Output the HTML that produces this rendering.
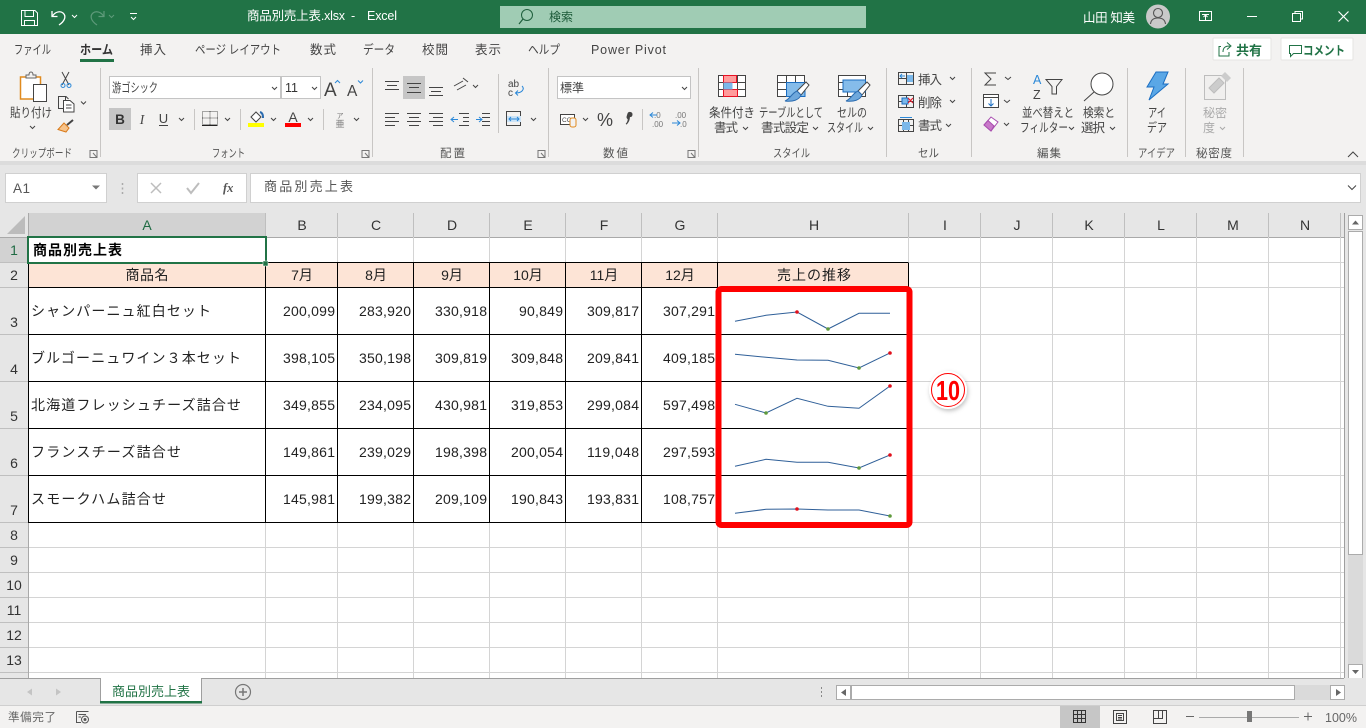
<!DOCTYPE html>
<html lang="ja"><head><meta charset="utf-8"><title>商品別売上表.xlsx - Excel</title>
<style>
html,body{margin:0;padding:0;width:1366px;height:728px;overflow:hidden;background:#fff}
svg{display:block;position:absolute;left:0;top:0}
text{font-family:"Liberation Sans","Noto Sans CJK JP",sans-serif;fill:#444;font-size:12px}
.r{font-size:12.5px;fill:#444}
.g{font-size:11.5px;fill:#555}
.c{font-size:14px;fill:#222}
.n{font-size:14px;fill:#222;text-anchor:end}
.m{font-size:14px;fill:#222;text-anchor:middle}
.h{font-size:14px;fill:#333;text-anchor:middle}
.w{fill:#fff}
.i{fill:none;stroke:#444;stroke-width:1}
.v{fill:none;stroke:#444;stroke-width:1}
.s{fill:none;stroke:#2f5f98;stroke-width:1}
</style></head><body>
<svg width="1366" height="728" viewBox="0 0 1366 728" xmlns="http://www.w3.org/2000/svg">
<defs><filter id="sh" x="-30%" y="-30%" width="160%" height="160%"><feDropShadow dx="1" dy="2" stdDeviation="2" flood-color="#000" flood-opacity=".25"/></filter></defs>
<!-- backgrounds -->
<rect width="1366" height="34" fill="#217346"/>
<rect y="34" width="1366" height="127" fill="#f3f2f1"/>
<rect y="161" width="1366" height="52" fill="#e6e6e6"/>
<rect y="161" width="1366" height="4" fill="#dcdcdc"/>
<!-- title bar -->
<g fill="none" stroke="#fff" stroke-width="1">
<path d="M21.5 10.5H35L37.5 13V25.5H21.5ZM25 10.5V16.5H33.5V10.5M24.5 25.5V20.5H34.5V25.5"/>
<path d="M52 11V16.5H57.5M52.5 16C55 12 60 10.5 63 13C66.5 16 65 21 59 25" stroke-width="1.3"/>
<path d="M72 15L74.5 17.5L77 15"/>
<g stroke="#5e9a7a"><path d="M104 11V16.5H98.5M103.5 16C101 12 96 10.5 93 13C89.5 16 91 21 97 25" stroke-width="1.2"/><path d="M109 15L111.5 17.5L114 15"/></g>
<path d="M130 13.5H137M131 17L133.5 19.5L136 17"/>
<rect x="1199.5" y="11.5" width="12" height="9"/><path d="M1202 14.5H1209M1205.5 20V15M1203.5 17L1205.5 15L1207.5 17"/>
<path d="M1247 16.5H1257"/>
<path d="M1292.5 13.5H1300.5V21.5H1292.5ZM1295 13V11.5H1302.5V19H1301"/>
<path d="M1338.5 11.5L1348.5 21.5M1348.5 11.5L1338.5 21.5" stroke-width="1.2"/>
</g>
<text x="247" y="20" class="w" style="font-size:12.5px" textLength="98">商品別売上表.xlsx</text>
<text x="351" y="20" class="w" style="font-size:12.5px">-</text>
<text x="367" y="20" class="w" style="font-size:12.5px" textLength="30">Excel</text>
<rect x="500" y="6" width="366" height="22" fill="#a0ccb4"/>
<circle cx="527" cy="15" r="5.5" fill="none" stroke="#1f5f3d" stroke-width="1"/><path d="M523 19L519 24" stroke="#1f5f3d" fill="none" stroke-width="1.2"/>
<text x="549" y="21" style="font-size:12px;fill:#1c5a39" textLength="24">検索</text>
<text x="1083" y="22" class="w" style="font-size:12.5px" textLength="52">山田 知美</text>
<circle cx="1158" cy="16.5" r="12" fill="#c9c9c9"/>
<circle cx="1158" cy="13" r="4.5" fill="none" stroke="#555" stroke-width="1.1"/><path d="M1150.5 24C1151 19.5 1154 18 1158 18C1162 18 1165 19.5 1165.5 24" fill="none" stroke="#555" stroke-width="1.1"/>
<!-- tabs -->
<g>
<text x="14" y="54" class="r" textLength="37" lengthAdjust="spacingAndGlyphs">ファイル</text>
<text x="80" y="54" class="r" style="font-weight:700;fill:#333" textLength="33" lengthAdjust="spacingAndGlyphs">ホーム</text>
<text x="140" y="54" class="r" textLength="26">挿入</text>
<text x="195" y="54" class="r" textLength="86" lengthAdjust="spacingAndGlyphs">ページ レイアウト</text>
<text x="310" y="54" class="r" textLength="26">数式</text>
<text x="363" y="54" class="r" textLength="32" lengthAdjust="spacingAndGlyphs">データ</text>
<text x="422" y="54" class="r" textLength="26">校閲</text>
<text x="475" y="54" class="r" textLength="26">表示</text>
<text x="528" y="54" class="r" textLength="32" lengthAdjust="spacingAndGlyphs">ヘルプ</text>
<text x="591" y="54" class="r" textLength="75">Power Pivot</text>
</g>
<rect x="80" y="59" width="34" height="3" fill="#217346"/>
<!-- share/comment -->
<rect x="1213" y="38" width="58" height="22" rx="1" fill="#fff" stroke="#e6e4e2"/>
<rect x="1281" y="38" width="72" height="22" rx="1" fill="#fff" stroke="#e6e4e2"/>
<path d="M1221 46.5H1219V56H1229V52M1223 52C1223 47 1226 46 1230 46M1227 42.5L1231 46L1227 49.5" fill="none" stroke="#217346"/>
<text x="1236" y="55" style="font-size:13px;font-weight:700;fill:#217346" textLength="26">共有</text>
<path d="M1289.5 45.5H1301.5V53.5H1293.5L1290.5 56.5V53.5H1289.5Z" fill="none" stroke="#217346"/>
<text x="1303" y="55" style="font-size:12.5px;font-weight:700;fill:#217346" textLength="42" lengthAdjust="spacingAndGlyphs">コメント</text>
<!-- group separators -->
<path d="M100.5 68V157M372.5 68V157M548.5 68V157M698.5 68V157M886.5 68V157M971.5 68V157M1127.5 68V157M1185.5 68V157M1243.5 68V157M498.5 74V133M194.5 109V130M240.5 109V130M323.5 109V130M642.5 109V130" stroke="#c8c6c4" fill="none"/>
<!-- group labels -->
<text x="12" y="157" class="g" textLength="60" lengthAdjust="spacingAndGlyphs">クリップボード</text>
<text x="212" y="157" class="g" textLength="33" lengthAdjust="spacingAndGlyphs">フォント</text>
<text x="440" y="157" class="g" textLength="25">配置</text>
<text x="603" y="157" class="g" textLength="25">数値</text>
<text x="773" y="157" class="g" textLength="37" lengthAdjust="spacingAndGlyphs">スタイル</text>
<text x="918" y="157" class="g" textLength="21" lengthAdjust="spacingAndGlyphs">セル</text>
<text x="1037" y="157" class="g" textLength="24">編集</text>
<text x="1138" y="157" class="g" textLength="37" lengthAdjust="spacingAndGlyphs">アイデア</text>
<text x="1196" y="157" class="g" textLength="36">秘密度</text>
<g fill="none" stroke="#777"><path d="M90 150.5H97V157.5H90ZM93 153L97 157.5"/><path d="M362 150.5H369V157.5H362ZM365 153L369 157.5"/><path d="M538 150.5H545V157.5H538ZM541 153L545 157.5"/><path d="M688 150.5H695V157.5H688ZM691 153L695 157.5"/></g>
<path d="M1348 157L1353 152L1358 157" fill="none" stroke="#444"/>
<!-- clipboard -->
<rect x="20.5" y="77" width="20" height="22" fill="#fff" stroke="#e08a1e" stroke-width="1.5"/>
<path d="M26 77V75H29C29 71 33 71 33 75H36V78H26Z" fill="#f3f2f1" stroke="#666"/>
<rect x="33.5" y="84.5" width="13" height="17" fill="#fff" stroke="#444"/>
<text x="10" y="117" class="r" textLength="42" lengthAdjust="spacingAndGlyphs">貼り付け</text>
<path d="M30 126L32.5 128.5L35 126" class="i"/>
<path d="M62 72L69 85M69 72L62 85" stroke="#444" fill="none"/><circle cx="63" cy="85.5" r="2" fill="none" stroke="#2b88d8"/><circle cx="69" cy="85.5" r="2" fill="none" stroke="#2b88d8"/>
<path d="M58.5 96.5H66L68.5 99" class="i"/><rect x="58.5" y="96.5" width="7" height="12" fill="none" stroke="#444"/><path d="M63.5 100.5H70L74 104V112H63.5ZM66 105H71.5M66 108H71.5" fill="#fff" stroke="#444"/>
<path d="M81 101.5L83.5 104L86 101.5" class="i"/>
<path d="M64 123L69 128L66 132L58 129.5Z" fill="#f7c38a" stroke="#d97a1a"/><path d="M67 125L73 120" stroke="#444" stroke-width="2" fill="none"/>
<!-- font boxes -->
<rect x="109.5" y="76.5" width="171" height="22" fill="#fff" stroke="#c4c4c4"/>
<rect x="281.5" y="76.5" width="39" height="22" fill="#fff" stroke="#c4c4c4"/>
<text x="112" y="92" style="font-size:12.5px;fill:#444" textLength="46" lengthAdjust="spacingAndGlyphs">游ゴシック</text>
<text x="285" y="92" style="font-size:12.5px;fill:#333" textLength="13">11</text>
<path d="M272 87L274.5 89.5L277 87M312 87L314.5 89.5L317 87" class="i"/>
<text x="324" y="96" style="font-size:19px;fill:#444">A</text><path d="M335 83L337.5 80.5L340 83" fill="none" stroke="#2b88d8"/>
<text x="347" y="96" style="font-size:15.5px;fill:#444">A</text><path d="M358 80.5L360.5 83L363 80.5" fill="none" stroke="#2b88d8"/>
<rect x="109" y="108" width="22" height="22" fill="#c6c6c6"/>
<text x="120" y="124" style="font-size:13.5px;font-weight:700;fill:#333;text-anchor:middle">B</text>
<text x="142" y="124" style="font-size:13.5px;font-style:italic;font-family:'Liberation Serif',serif;fill:#444;text-anchor:middle">I</text>
<text x="163.5" y="123" style="font-size:13px;fill:#444;text-anchor:middle">U</text><path d="M159 125.5H168" stroke="#444"/>
<path d="M179 118L181.5 120.5L184 118M225 118L227.5 120.5L230 118M271 118L273.5 120.5L276 118M308 118L310.5 120.5L313 118M354 118L356.5 120.5L359 118" class="i"/>
<path d="M202.5 111.5H217.5V124.5H202.5ZM210 111.5V124.5M202.5 118H217.5" fill="none" stroke="#555" stroke-dasharray="1 1"/><path d="M202 125.5H217.5" stroke="#222"/>
<path d="M251 117L256 112L261 117L256 122Z" fill="#fff" stroke="#444"/><path d="M260 112C263 113 263 116 263 118" stroke="#2b6cb0" stroke-width="2" fill="none"/><rect x="248" y="123" width="16" height="4" fill="#ff0"/>
<text x="293" y="122" style="font-size:14px;fill:#444;text-anchor:middle">A</text><rect x="285" y="123" width="16" height="4" fill="#f00"/>
<text x="340" y="118" style="font-size:7px;fill:#777;text-anchor:middle">ア</text><text x="340" y="127" style="font-size:9px;fill:#777;text-anchor:middle">亜</text>
<!-- alignment -->
<g fill="none" stroke="#444">
<path d="M385 81.5H399M387 85.5H397M385 89.5H399"/>
<rect x="403" y="76" width="22" height="23" fill="#c6c6c6" stroke="none"/>
<path d="M407 83.5H421M409 87.5H419M407 92.5H421"/>
<path d="M429 87.5H443M431 91.5H441M429 95.5H443"/>
<path d="M385 113.5H399M385 117.5H395M385 121.5H399M385 125.5H395"/>
<path d="M407 113.5H421M409 117.5H419M407 121.5H421M409 125.5H419"/>
<path d="M429 113.5H443M433 117.5H443M429 121.5H443M433 125.5H443"/>
<path d="M459 113.5H469M463 117.5H469M463 121.5H469M459 125.5H469"/>
<path d="M482 113.5H490M482 117.5H490M482 121.5H490M482 125.5H490"/>
<path d="M454 86L463 81M457 90L466 85M463 78L468 82"/>
<path d="M473 85L475.5 87.5L478 85"/>
<rect x="506.5" y="111.5" width="14" height="14"/>
<path d="M531 118L533.5 120.5L536 118"/>
</g>
<rect x="507" y="116" width="14" height="6" fill="#cce4f7"/>
<path d="M509 119H519M511 117L509 119L511 121M517 117L519 119L517 121" fill="none" stroke="#2b88d8"/>
<path d="M451 119.5H458M454 117L451 119.5L454 122" fill="none" stroke="#2b88d8"/>
<path d="M476 119.5H482M479 117L482 119.5L479 122" fill="none" stroke="#2b88d8"/>
<text x="508" y="87" style="font-size:10px;fill:#444">ab</text><text x="508" y="96" style="font-size:10px;fill:#444">c</text>
<path d="M522 86C525 89 522 93 516 93M518 90.5L515.5 93L518 95.5" fill="none" stroke="#2b88d8"/>
<!-- number -->
<rect x="557.5" y="76.5" width="133" height="22" fill="#fff" stroke="#c4c4c4"/>
<text x="560" y="92" style="font-size:12px;fill:#444" textLength="24">標準</text>
<path d="M682 87L684.5 89.5L687 87" class="i"/>
<rect x="560.5" y="114.5" width="14" height="10" fill="#fff" stroke="#444"/><text x="562" y="122" style="font-size:6.5px;fill:#444">CCC</text>
<rect x="570" y="118" width="6" height="9" rx="2" fill="#f3f2f1" stroke="#e08a1e"/>
<path d="M583 118L585.5 120.5L588 118" class="i"/>
<text x="605" y="126" style="font-size:18px;fill:#444;text-anchor:middle">%</text>
<path d="M627.5 113.5a2.6 2.6 0 1 1 2.4 3.6c0 3-1.200 5.500-3.400 7.500l-0.800-.8c1.400-1.500 2-3 2-4.700c-1-.6-1.500-1.700-1-3z" fill="#444"/>
<text x="654" y="118" style="font-size:8px;fill:#777">.0</text><text x="652" y="127" style="font-size:8px;fill:#777">.00</text>
<path d="M650 115H657M653 112.5L650 115L653 117.5" fill="none" stroke="#2b88d8"/>
<text x="675" y="118" style="font-size:8px;fill:#777">.00</text><text x="680" y="127" style="font-size:8px;fill:#777">.0</text>
<path d="M672 123H680M677 120.5L680 123L677 125.5" fill="none" stroke="#2b88d8"/>
<!-- styles -->
<g fill="none" stroke="#444">
<rect x="718.5" y="75.5" width="27" height="21" fill="#fff"/><path d="M718.5 82.500H745.5M718.5 89.5H745.5M723.500 75.5V96.5M737.5 75.5V96.5"/>
<rect x="777.5" y="75.5" width="27" height="21" fill="#fff"/><path d="M777.5 82.5H804.5M777.5 89.5H804.5M786.500 75.5V96.5M795.5 75.5V96.5"/>
<rect x="838.5" y="75.5" width="27" height="21" fill="#fff"/><path d="M838.5 82.5H843M838.5 89.5H843M847.5 92V96.5M856.5 92V96.5M843 92H865.5"/>
</g>
<path d="M723.5 75.5H736.5V82.5H723.5ZM723.5 89.5H737.5V96.5H723.5Z" fill="#ff9c9c" stroke="#e81123"/>
<rect x="723.5" y="82.5" width="9" height="7" fill="#7bb8ea"/>
<rect x="786.5" y="82.5" width="18.500" height="14" fill="#85bcea" stroke="#1b6ec2"/>
<rect x="843" y="80" width="22.500" height="12" fill="#85bcea" stroke="#1b6ec2"/>
<path d="M806 82L809 85L801 95L797 91Z" fill="#fff" stroke="#444"/><path d="M797 91L801 95C799 100 793 102 785 101C790 99 792 93 797 91Z" fill="#6fa8dc" stroke="#2b6cb0"/>
<path d="M867 82L870 85L862 95L858 91Z" fill="#fff" stroke="#444"/><path d="M858 91L862 95C860 100 854 102 846 101C851 99 853 93 858 91Z" fill="#6fa8dc" stroke="#2b6cb0"/>
<text x="709" y="117" class="r" textLength="46" lengthAdjust="spacingAndGlyphs">条件付き</text>
<text x="714" y="132" class="r" textLength="24">書式</text>
<text x="759" y="117" class="r" textLength="64" lengthAdjust="spacingAndGlyphs">テーブルとして</text>
<text x="761" y="132" class="r" textLength="48">書式設定</text>
<text x="837" y="117" class="r" textLength="30" lengthAdjust="spacingAndGlyphs">セルの</text>
<text x="827" y="132" class="r" textLength="36" lengthAdjust="spacingAndGlyphs">スタイル</text>
<path d="M743 127L745.5 129.5L748 127M813 127L815.5 129.5L818 127M868 127L870.5 129.5L873 127" class="i"/>
<!-- cells group -->
<g fill="none" stroke="#444">
<path d="M898.5 72.5H913.5V84.5H898.5ZM898.5 78.5H913.5M906.5 72.5V84.5"/>
<path d="M898.5 95.5H913.5V107.5H898.5ZM898.5 101.5H913.5M906.5 95.5V107.5"/>
<path d="M898.5 119.5H913.5V131.5H898.5ZM898.5 125.5H913.5M903.5 119.5V131.5M908.5 119.5V131.5"/>
<path d="M950 77L952.5 79.5L955 77M950 100L952.5 102.5L955 100M946 124L948.5 126.5L951 124"/>
</g>
<rect x="907" y="75" width="6" height="7" fill="#7bb8ea"/><path d="M900 76H905M902 74L900 76L902 78" fill="none" stroke="#2b88d8"/>
<rect x="902" y="98" width="6" height="6" fill="#7bb8ea" stroke="#1b6ec2"/><path d="M908 98L913 103M913 98L908 103" stroke="#e81123" fill="none"/>
<rect x="902" y="122" width="8" height="8" fill="#7bb8ea"/><path d="M900 117.5H912" stroke="#2b88d8"/>
<text x="918" y="84" class="r" textLength="24">挿入</text>
<text x="918" y="107" class="r" textLength="24">削除</text>
<text x="918" y="130" class="r" textLength="24">書式</text>
<!-- editing -->
<path d="M996 73H985L991 79L985 85H996" fill="none" stroke="#444"/>
<path d="M1005 77L1008 79.5L1011 77M1004 100L1007 102.5L1010 100M1004 123L1006.5 125.5L1009 123" class="i"/>
<rect x="983.5" y="94.5" width="15" height="13" fill="#fff" stroke="#444"/><path d="M983.5 97.5H998.5" stroke="#444"/><path d="M991 99V106M988.5 103.5L991 106L993.5 103.5" stroke="#1b6ec2" fill="none"/>
<path d="M984 125L991 117L998 122L991 131Z" fill="#fff" stroke="#a94fb0"/><path d="M984 125L988 120.5L994 126L991 131Z" fill="#c879c9" stroke="#a94fb0"/>
<text x="1033" y="84" style="font-size:12.5px;fill:#2b88d8">A</text>
<text x="1033" y="99" style="font-size:12.5px;fill:#444">Z</text>
<path d="M1046 79.5H1062L1056.5 86.5V94L1052 94V86.5Z" fill="none" stroke="#444"/>
<circle cx="1102" cy="84" r="11" fill="#fff" stroke="#444"/><path d="M1094 92L1084 101" stroke="#444" fill="none"/>
<text x="1022" y="117" class="r" textLength="52" lengthAdjust="spacingAndGlyphs">並べ替えと</text>
<text x="1020" y="132" class="r" textLength="48" lengthAdjust="spacingAndGlyphs">フィルター</text>
<text x="1083" y="117" class="r" textLength="32" lengthAdjust="spacingAndGlyphs">検索と</text>
<text x="1081" y="132" class="r" textLength="24">選択</text>
<path d="M1069 127L1071.5 129.5L1074 127M1110 127L1112.5 129.5L1115 127" class="i"/>
<!-- ideas -->
<path d="M1156 72H1168L1163 84H1168L1149 100L1154 87H1147Z" fill="#5aa7e6" stroke="#1b6ec2"/>
<text x="1148" y="117" class="r" textLength="18" lengthAdjust="spacingAndGlyphs">アイ</text>
<text x="1147" y="132" class="r" textLength="20" lengthAdjust="spacingAndGlyphs">デア</text>
<!-- sensitivity -->
<rect x="1204.5" y="75.5" width="21" height="24" fill="#f0efee" stroke="#bdbdbd"/>
<path d="M1209 88L1219 78L1224 83L1214 93Z" fill="#ccc" stroke="#bdbdbd"/><path d="M1221 76L1225 72L1231 78L1227 82Z" fill="#ccc"/>
<text x="1203" y="117" style="font-size:12px;fill:#aaa" textLength="24">秘密</text>
<text x="1203" y="132" style="font-size:12px;fill:#aaa">度</text>
<path d="M1220 127L1222.5 129.5L1225 127" fill="none" stroke="#aaa"/>
<!-- formula bar -->
<rect x="5.5" y="173.5" width="101" height="29" fill="#fff" stroke="#d0d0d0"/>
<text x="13" y="193" style="font-size:13.5px;fill:#555" textLength="17">A1</text>
<path d="M92 185.5H100L96 189.5Z" fill="#777"/>
<path d="M122.5 183V185M122.5 187.5V189.5M122.5 192V194" stroke="#aaa" stroke-width="1.5"/>
<rect x="137.5" y="173.5" width="109" height="29" fill="#fff" stroke="#d0d0d0"/>
<rect x="250.5" y="173.5" width="1110" height="29" fill="#fff" stroke="#d0d0d0"/>
<path d="M151 183L161 193M161 183L151 193" stroke="#bdbdbd" stroke-width="1.5" fill="none"/>
<path d="M187 188L191 193L199 183" stroke="#bdbdbd" stroke-width="2" fill="none"/>
<text x="223" y="192" style="font-size:12.5px;font-weight:700;font-style:italic;font-family:'Liberation Serif',serif;fill:#555">fx</text>
<text x="264" y="191" style="font-size:13px;fill:#555" textLength="89">商品別売上表</text>
<path d="M1348 185.5L1352 189.5L1356 185.5" fill="none" stroke="#444"/>
<!-- sheet -->
<rect x="29" y="237" width="1315" height="441" fill="#fff"/>
<rect y="213" width="1366" height="24" fill="#e6e6e6"/>
<rect x="0" y="237" width="28" height="441" fill="#e6e6e6"/>
<rect x="29" y="213" width="237" height="24" fill="#d2d2d2"/>
<rect x="0" y="237" width="28" height="26" fill="#d2d2d2"/>
<path d="M25 216V234H7Z" fill="#bcbcbc"/>
<path d="M28.5 213V678M0 237.5H1344" stroke="#a9a9a9" fill="none"/>
<path d="M265.5 213V237M337.5 213V237M413.5 213V237M489.5 213V237M565.5 213V237M641.5 213V237M717.5 213V237M908.5 213V237M980.5 213V237M1052.5 213V237M1124.5 213V237M1196.5 213V237M1268.5 213V237M1340.5 213V237M0 262.5H28M0 287.5H28M0 334.5H28M0 381.5H28M0 428.5H28M0 475.5H28M0 522.5H28M0 547.5H28M0 572.5H28M0 597.5H28M0 622.5H28M0 647.5H28M0 672.5H28" stroke="#bfbfbf" fill="none"/>
<path d="M265.5 237V678M337.5 237V678M413.5 237V678M489.5 237V678M565.5 237V678M641.5 237V678M717.5 237V678M908.5 237V678M980.5 237V678M1052.5 237V678M1124.5 237V678M1196.5 237V678M1268.5 237V678M1340.5 237V678M29 262.5H1344M29 287.5H1344M29 334.5H1344M29 381.5H1344M29 428.5H1344M29 475.5H1344M29 522.5H1344M29 547.5H1344M29 572.5H1344M29 597.5H1344M29 622.5H1344M29 647.5H1344M29 672.5H1344" stroke="#d4d4d4" fill="none"/>
<path d="M1344.5 213V678" stroke="#9f9f9f"/>
<rect x="29" y="263" width="880" height="25" fill="#fde4d6"/>
<path d="M29 262.5H908.5M29 287.5H908.5M29 334.5H908.5M29 381.5H908.5M29 428.5H908.5M29 475.5H908.5M29 522.5H908.5M28.5 263V523M265.5 263V523M337.5 263V523M413.5 263V523M489.5 263V523M565.5 263V523M641.5 263V523M717.5 263V523M908.5 263V523" stroke="#000" fill="none"/>
<!-- column headers -->
<text x="147" y="230" class="h" style="fill:#1f6b43">A</text>
<text x="302" y="230" class="h">B</text><text x="376" y="230" class="h">C</text><text x="452" y="230" class="h">D</text><text x="528" y="230" class="h">E</text><text x="604" y="230" class="h">F</text><text x="680" y="230" class="h">G</text><text x="814" y="230" class="h">H</text><text x="945" y="230" class="h">I</text><text x="1017" y="230" class="h">J</text><text x="1089" y="230" class="h">K</text><text x="1161" y="230" class="h">L</text><text x="1233" y="230" class="h">M</text><text x="1305" y="230" class="h">N</text>
<!-- row headers -->
<text x="14" y="255" class="h" style="fill:#1f6b43">1</text><text x="14" y="280" class="h">2</text><text x="14" y="327" class="h">3</text><text x="14" y="374" class="h">4</text><text x="14" y="421" class="h">5</text><text x="14" y="468" class="h">6</text><text x="14" y="515" class="h">7</text><text x="14" y="540" class="h">8</text><text x="14" y="565" class="h">9</text><text x="14" y="590" class="h">10</text><text x="14" y="615" class="h">11</text><text x="14" y="640" class="h">12</text><text x="14" y="665" class="h">13</text>
<!-- selected cell -->
<rect x="28" y="237" width="238" height="26" fill="none" stroke="#217346" stroke-width="2"/>
<rect x="263" y="261" width="5" height="5" fill="#217346" stroke="#fff" stroke-width=".5"/>
<text x="33" y="255" style="font-size:14px;font-weight:700;fill:#000" textLength="89">商品別売上表</text>
<!-- table header -->
<text x="147" y="280" class="m" textLength="43">商品名</text>
<text x="302" y="280" class="m">7月</text><text x="376" y="280" class="m">8月</text><text x="452" y="280" class="m">9月</text><text x="528" y="280" class="m">10月</text><text x="604" y="280" class="m">11月</text><text x="680" y="280" class="m">12月</text>
<text x="777" y="280" style="font-size:14px;fill:#222" textLength="74">売上の推移</text>
<!-- rows -->
<text x="31" y="316" class="c" textLength="180">シャンパーニュ紅白セット</text>
<text x="335" y="316" class="n" textLength="52">200,099</text><text x="411" y="316" class="n" textLength="52">283,920</text><text x="487" y="316" class="n" textLength="52">330,918</text><text x="563" y="316" class="n" textLength="44">90,849</text><text x="639" y="316" class="n" textLength="52">309,817</text><text x="715" y="316" class="n" textLength="52">307,291</text>
<text x="31" y="363" class="c" textLength="210">ブルゴーニュワイン３本セット</text>
<text x="335" y="363" class="n" textLength="52">398,105</text><text x="411" y="363" class="n" textLength="52">350,198</text><text x="487" y="363" class="n" textLength="52">309,819</text><text x="563" y="363" class="n" textLength="52">309,848</text><text x="639" y="363" class="n" textLength="52">209,841</text><text x="715" y="363" class="n" textLength="52">409,185</text>
<text x="31" y="410" class="c" textLength="210">北海道フレッシュチーズ詰合せ</text>
<text x="335" y="410" class="n" textLength="52">349,855</text><text x="411" y="410" class="n" textLength="52">234,095</text><text x="487" y="410" class="n" textLength="52">430,981</text><text x="563" y="410" class="n" textLength="52">319,853</text><text x="639" y="410" class="n" textLength="52">299,084</text><text x="715" y="410" class="n" textLength="52">597,498</text>
<text x="31" y="457" class="c" textLength="150">フランスチーズ詰合せ</text>
<text x="335" y="457" class="n" textLength="52">149,861</text><text x="411" y="457" class="n" textLength="52">239,029</text><text x="487" y="457" class="n" textLength="52">198,398</text><text x="563" y="457" class="n" textLength="52">200,054</text><text x="639" y="457" class="n" textLength="52">119,048</text><text x="715" y="457" class="n" textLength="52">297,593</text>
<text x="31" y="504" class="c" textLength="135">スモークハム詰合せ</text>
<text x="335" y="504" class="n" textLength="52">145,981</text><text x="411" y="504" class="n" textLength="52">199,382</text><text x="487" y="504" class="n" textLength="52">209,109</text><text x="563" y="504" class="n" textLength="52">190,843</text><text x="639" y="504" class="n" textLength="52">193,831</text><text x="715" y="504" class="n" textLength="52">108,757</text>
<!-- sparklines -->
<polyline class="s" points="735,321.3 766,315.3 797,312 828,329 859,313.3 890,313.3"/>
<polyline class="s" points="735,354.3 766,357.3 797,360 828,360.3 859,368 890,353"/>
<polyline class="s" points="735,404.3 766,413 797,398.3 828,406.3 859,408.3 890,386"/>
<polyline class="s" points="735,466.3 766,459.3 797,462.3 828,462.3 859,468 890,455"/>
<polyline class="s" points="735,513.3 766,509.3 797,509 828,510 859,510 890,516"/>
<g fill="#e0101c"><circle cx="797" cy="312" r="1.8"/><circle cx="890" cy="353" r="1.8"/><circle cx="890" cy="386" r="1.8"/><circle cx="890" cy="455" r="1.8"/><circle cx="797" cy="509" r="1.8"/></g>
<g fill="#5f9a3c"><circle cx="828" cy="329" r="1.8"/><circle cx="859" cy="368" r="1.8"/><circle cx="766" cy="413" r="1.8"/><circle cx="859" cy="468" r="1.8"/><circle cx="890" cy="516" r="1.8"/></g>
<!-- callout -->
<rect x="718.5" y="289" width="191" height="236" rx="3" fill="none" stroke="#f00" stroke-width="6"/>
<circle cx="948" cy="390" r="19" fill="#fff" filter="url(#sh)"/>
<circle cx="948" cy="390" r="16.5" fill="none" stroke="#f00" stroke-width="1"/>
<text x="948" y="400" style="font-size:28px;font-weight:700;fill:#f00;text-anchor:middle" textLength="24" lengthAdjust="spacingAndGlyphs">10</text>
<!-- vertical scrollbar -->
<rect x="1345" y="213" width="21" height="465" fill="#e6e6e6"/>
<rect x="1348" y="231" width="15" height="433" fill="#dadada"/>
<rect x="1348.5" y="215.5" width="14" height="14" fill="#fff" stroke="#ababab"/><path d="M1352 224.5H1359L1355.5 220.5Z" fill="#666"/>
<rect x="1348.5" y="231.5" width="14" height="323" fill="#fff" stroke="#ababab"/>
<rect x="1348.5" y="664.5" width="14" height="14" fill="#fff" stroke="#ababab"/><path d="M1352 670H1359L1355.5 674Z" fill="#666"/>
<!-- sheet tabs -->
<rect y="678" width="1366" height="28" fill="#e6e6e6"/>
<path d="M0 678.5H1344" stroke="#9f9f9f"/>
<path d="M32 688.5V695.5L27 692ZM56 688.5V695.5L61 692Z" fill="#c4c4c4"/>
<rect x="100.5" y="678.5" width="101" height="24" fill="#fff" stroke="#9f9f9f"/>
<rect x="100" y="701" width="102" height="2.5" fill="#217346"/>
<rect x="101" y="677" width="100" height="2" fill="#fff"/>
<text x="112" y="696" style="font-size:13px;fill:#217346" textLength="78">商品別売上表</text>
<circle cx="243" cy="692" r="7.5" fill="none" stroke="#777" stroke-width="1.2"/><path d="M239 692H247M243 688V696" stroke="#777" stroke-width="1.5"/>
<path d="M821.5 687V689M821.5 691V693M821.5 695V697" stroke="#888"/>
<rect x="836" y="685" width="494" height="15" fill="#dadada"/>
<rect x="836.5" y="685.5" width="14" height="14" fill="#fff" stroke="#ababab"/><path d="M846 689V696L841 692.5Z" fill="#666"/>
<rect x="851.5" y="685.5" width="443" height="14" fill="#fff" stroke="#ababab"/>
<rect x="1330.5" y="685.5" width="14" height="14" fill="#fff" stroke="#ababab"/><path d="M1336 689V696L1341 692.5Z" fill="#666"/>
<!-- status bar -->
<rect y="706" width="1366" height="22" fill="#f3f2f1"/>
<path d="M0 705.5H1366" stroke="#cfcfcf"/>
<text x="8" y="721" style="font-size:11.5px;fill:#666" textLength="48">準備完了</text>
<path d="M76.5 711.5H88.5M76.5 711.5V722.5H81M78.5 714.5H86M78.5 717H81" fill="none" stroke="#555"/><circle cx="85" cy="719.5" r="3.5" fill="none" stroke="#555"/><circle cx="85" cy="719.5" r="1.5" fill="#555"/>
<rect x="1060" y="706" width="40" height="22" fill="#c6c6c6"/>
<path d="M1073.5 710.5H1085.5V722.5H1073.5ZM1073.5 714.5H1085.5M1073.5 718.5H1085.5M1077.5 710.5V722.5M1081.5 710.5V722.5" fill="none" stroke="#333"/>
<path d="M1113.5 710.5H1126.5V723.5H1113.5ZM1116.5 713.5H1123.5V720.5H1116.5ZM1118 715.5H1122M1118 717.5H1122M1118 719H1122" fill="none" stroke="#444"/>
<path d="M1153.5 710.5H1166.5V723.5H1153.5ZM1153.5 718.5H1162.5V710.5M1158.5 710.5V718.5" fill="none" stroke="#444"/>
<path d="M1186 716.5H1194M1304 716.5H1312M1308 712.5V720.5" stroke="#666" fill="none"/>
<path d="M1199 717.5H1299" stroke="#aaa" fill="none"/>
<rect x="1247" y="711" width="5" height="11" fill="#777"/>
<text x="1325" y="722" style="font-size:12.5px;fill:#666" textLength="32">100%</text>
</svg>
</body></html>
